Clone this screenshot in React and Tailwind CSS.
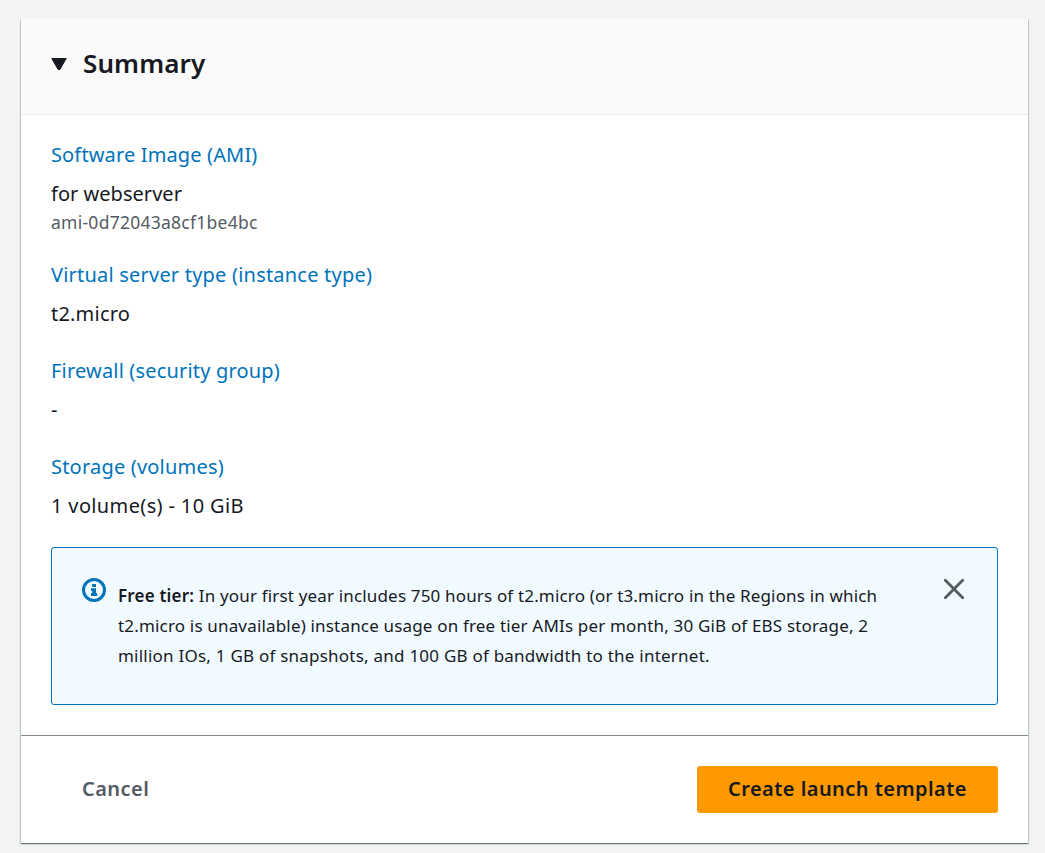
function Field({ label, value, note, labelClass, valueClass }) {
  return (
    <div className={note ? "h-[120px]" : "h-[96px]"}>
      <div className={`h-[39px] text-[20px] leading-[30px] text-[#0073bb] ${labelClass}`}>{label}</div>
      <div className={`text-[20px] leading-[30px] text-[#16191f] ${valueClass}`}>{value}</div>
      {note && <div className="text-[17.5px] leading-[26px] tracking-[0.26px] text-[#545b64]">{note}</div>}
    </div>
  );
}

function InfoIcon() {
  return (
    <svg className="mt-[30px] h-6 w-6 shrink-0" viewBox="0 0 24 24" fill="none">
      <circle cx="12" cy="12" r="10.5" stroke="#0073bb" strokeWidth="3" />
      <path d="M10.2 6h3.8v3h-3.8zM9 10.3h5V15h1.2v3H9v-3h1.3v-1.9H9z" fill="#0073bb" />
    </svg>
  );
}

export default function App() {
  return (
    <div className="h-[853px] bg-[#f2f3f3] pt-[19px] pl-[21px] font-['Noto_Sans',sans-serif] text-[#16191f]">
      <main className="flex h-[824px] w-[1007px] flex-col bg-white shadow-[0_1px_1px_0_rgba(0,28,36,0.4),1px_1px_1px_0_rgba(0,28,36,0.15),-1px_1px_1px_0_rgba(0,28,36,0.15)]">
        <header className="flex h-[96px] items-center gap-4 border-b border-[#eaeded] bg-[#fafafa] px-[30px] pb-[6px]">
          <svg className="h-4 w-4" viewBox="0 0 16 16">
            <path d="M.8 2.5h14.4L8.9 13.5H7.1z" fill="#16191f" stroke="#16191f" strokeLinejoin="round" />
          </svg>
          <h2 className="text-[26px] font-semibold tracking-[0.1px]">Summary</h2>
        </header>
        <section className="h-[620px] px-[30px] pt-[25px]">
          <Field label="Software Image (AMI)" value="for webserver" note="ami-0d72043a8cf1be4bc" labelClass="tracking-[0.14px]" valueClass="tracking-[0.03px]" />
          <Field label="Virtual server type (instance type)" value="t2.micro" labelClass="tracking-[0.21px]" valueClass="tracking-[0.2px]" />
          <Field label="Firewall (security group)" value="-" labelClass="tracking-[0.18px]" valueClass="tracking-normal" />
          <div className="h-[95px]">
            <Field label="Storage (volumes)" value="1 volume(s) - 10 GiB" labelClass="tracking-[0.2px]" valueClass="tracking-[0.36px]" />
          </div>
          <div className="flex h-[158px] rounded-[3px] border border-[#0073bb] bg-[#f1faff] pl-[30px] pr-[32px]">
            <InfoIcon />
            <p className="ml-3 grow pt-[33px] text-[17px] leading-[30px] whitespace-nowrap">
              <span className="tracking-[0.165px]">
                <b className="font-semibold tracking-[0.2px]">Free tier:</b> In your first year includes 750 hours of t2.micro (or t3.micro in the Regions in which
              </span>
              <br />
              <span className="tracking-[0.175px]">t2.micro is unavailable) instance usage on free tier AMIs per month, 30 GiB of EBS storage, 2</span>
              <br />
              <span className="tracking-[0.23px]">million IOs, 1 GB of snapshots, and 100 GB of bandwidth to the internet.</span>
            </p>
            <button aria-label="Dismiss" className="mt-[30px] h-[22px] w-[22px] shrink-0">
              <svg viewBox="0 0 22 22" fill="none" stroke="#545b64" strokeWidth="2.8" strokeLinecap="round">
                <path d="M2.3 2.3l17.4 17.4M19.7 2.3L2.3 19.7" />
              </svg>
            </button>
          </div>
        </section>
        <footer className="flex h-[108px] items-center justify-between border-t border-[#7f8a90] px-[30px] text-[20px] font-semibold">
          <button className="h-[47px] pl-[31px] pb-[2px] tracking-[0.45px] text-[#545b64]">Cancel</button>
          <button className="h-[47px] w-[301px] rounded-[3px] bg-[#ff9900] pb-[2px] tracking-[0.45px]">Create launch template</button>
        </footer>
      </main>
    </div>
  );
}
